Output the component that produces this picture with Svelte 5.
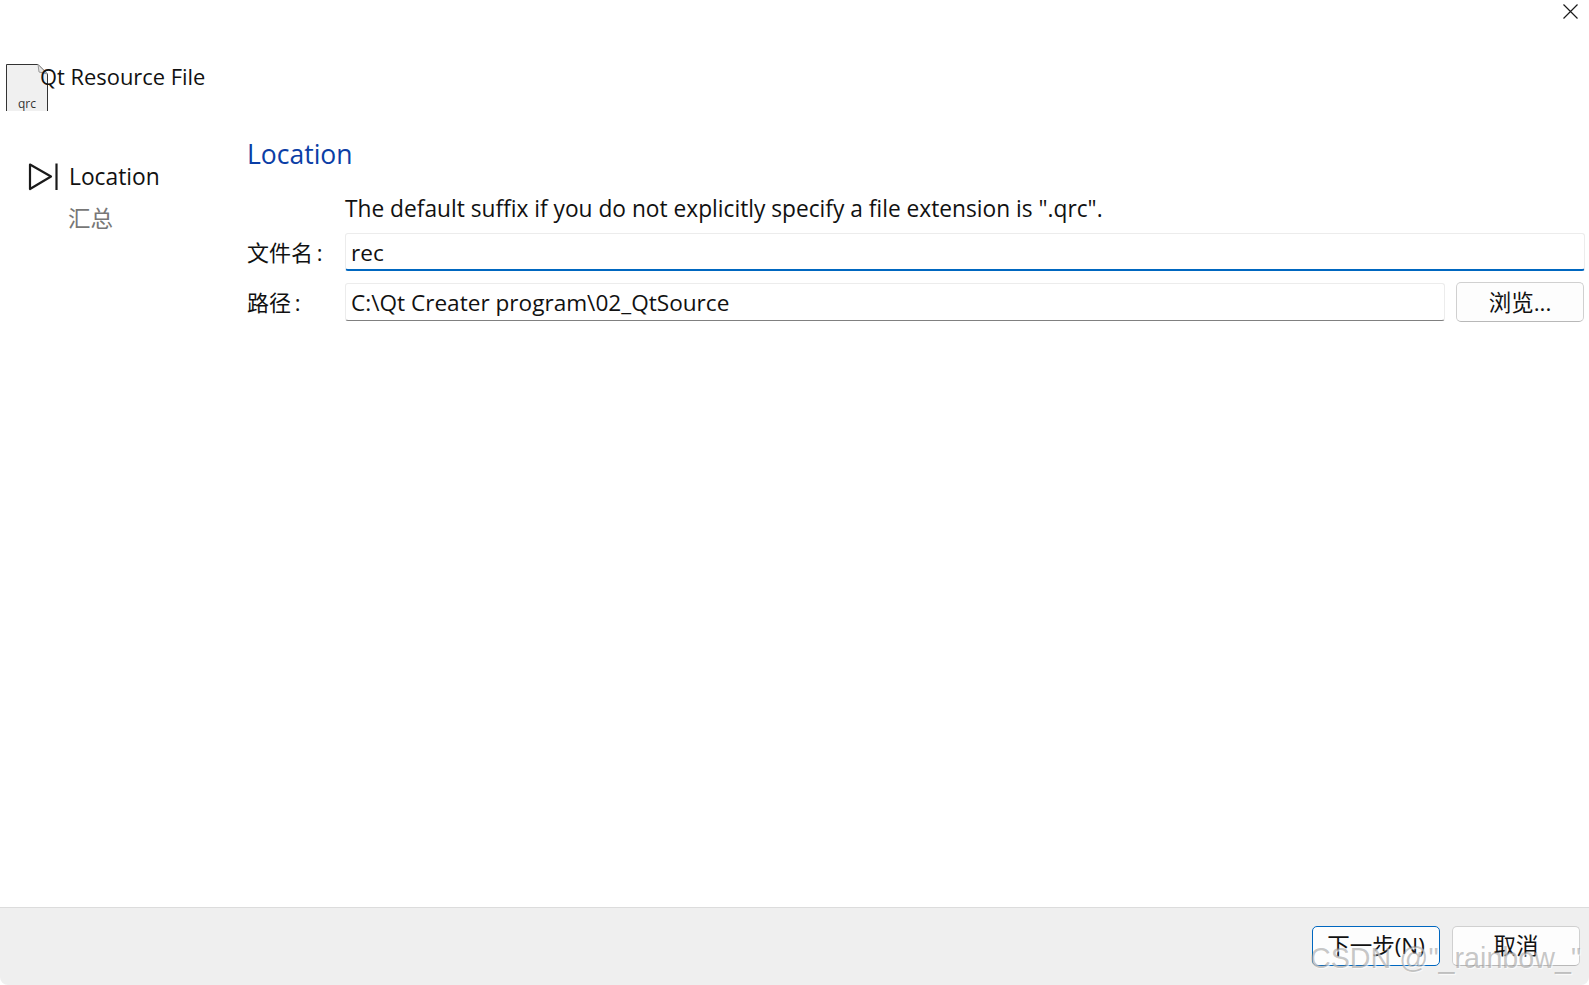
<script>
    let fileName = "rec";
    let path = "C:\\Qt Creater program\\02_QtSource";
</script>

<div class="dialog">
    <button class="close" aria-label="close">
        <svg width="17" height="17" viewBox="0 0 17 17">
            <path d="M1.5 1.5 L15.5 15.5 M15.5 1.5 L1.5 15.5" stroke="#1a1a1a" stroke-width="1.2" fill="none" />
        </svg>
    </button>

    <div class="header">
        <div class="file-icon">
            <svg width="44" height="47" viewBox="0 0 44 47">
                <path d="M0.5 47 V0.5 H32 L41.5 10 V47" fill="#f0f0f0" stroke="#333" stroke-width="1" />
                <path d="M32 0.5 L33 8 L41.5 10 Z" fill="#e4e4e4" stroke="#999" stroke-width="1" />
            </svg>
            <span class="qrc">qrc</span>
        </div>
        <span class="title">Qt Resource File</span>
    </div>

    <div class="main">
        <div class="side">
            <div class="step">
                <svg width="30" height="30" viewBox="0 0 30 30">
                    <path d="M2 2.5 L23 14.5 L2 27 Z" fill="none" stroke="#1a1a1a" stroke-width="2.2" stroke-linejoin="round" />
                    <path d="M28.5 1.5 V28" stroke="#1a1a1a" stroke-width="2.2" />
                </svg>
                <span>Location</span>
            </div>
            <div class="step-next">汇总</div>
        </div>

        <div class="content">
            <h1>Location</h1>
            <div class="form">
                <div></div>
                <div class="hint">The default suffix if you do not explicitly specify a file extension is ".qrc".</div>
                <span class="label">文件名&thinsp;:</span>
                <input class="field focus" bind:value={fileName} />
                <span class="label">路径&thinsp;:</span>
                <div class="path-row">
                    <input class="field" bind:value={path} />
                    <button class="btn browse">浏览...</button>
                </div>
            </div>
        </div>
    </div>

    <div class="footer">
        <button class="btn next">下一步(N)</button>
        <button class="btn">取消</button>
    </div>

    <div class="watermark">CSDN @"_rainbow_"</div>
</div>

<style>
    :global(body) {
        margin: 0;
        background: #fff;
    }

    .dialog {
        position: relative;
        height: 985px;
        display: flex;
        flex-direction: column;
        overflow: hidden;
        font-family: "Open Sans", "Noto Sans CJK SC", sans-serif;
        color: #111;
        background: #fff;
    }

    .close {
        position: absolute;
        top: 3px;
        right: 10px;
        width: 17px;
        height: 17px;
        padding: 0;
        border: none;
        background: none;
    }

    .header {
        height: 47px;
        margin-top: 64px;
        padding-left: 6px;
        display: flex;
    }

    .file-icon {
        position: relative;
        width: 44px;
        height: 47px;
        flex: none;
    }

    .file-icon svg {
        display: block;
    }

    .qrc {
        position: absolute;
        left: 12px;
        top: 32px;
        font-size: 12px;
        line-height: 16px;
        color: #333;
    }

    .title {
        position: relative;
        margin-left: -10px;
        font-size: 21.9px;
        line-height: 26px;
        white-space: nowrap;
    }

    .main {
        flex: 1;
        display: flex;
    }

    .side {
        width: 247px;
        flex: none;
        padding: 51px 0 0 28px;
        box-sizing: border-box;
    }

    .step {
        display: flex;
        align-items: center;
        gap: 11px;
        font-size: 22.8px;
        line-height: 30px;
    }

    .step-next {
        margin: 12px 0 0 40px;
        font-size: 22.5px;
        line-height: 30px;
        color: #777;
    }

    .content {
        flex: 1;
        padding: 24px 4px 0 0;
    }

    h1 {
        margin: 0;
        font-size: 26.5px;
        font-weight: 400;
        line-height: 38px;
        color: #0b3ea6;
    }

    .form {
        margin-top: 18px;
        display: grid;
        grid-template-columns: 98px 1fr;
        align-items: center;
        row-gap: 11px;
    }

    .hint {
        font-size: 22.73px;
        line-height: 36px;
        margin-bottom: -5px;
    }

    .label {
        font-size: 22px;
        margin-bottom: 2px;
    }

    .field {
        display: block;
        width: 100%;
        height: 38px;
        box-sizing: border-box;
        padding: 0 5px;
        font: inherit;
        font-size: 22.6px;
        color: #111;
        background: #fff;
        border: 1px solid #ececec;
        border-bottom: 1px solid #808080;
        border-radius: 3px;
        outline: none;
    }

    .focus {
        padding-top: 2px;
        border-bottom: 2px solid #0067c0;
    }

    .path-row {
        display: flex;
        align-items: center;
        gap: 11px;
    }

    .btn {
        width: 128px;
        height: 40px;
        padding: 0 0 3px;
        flex: none;
        font: inherit;
        font-size: 22.5px;
        color: #111;
        background: #fdfdfd;
        border: 1px solid #d0d0d0;
        border-bottom-color: #b8b8b8;
        border-radius: 5px;
    }

    .browse {
        margin-right: 1px;
        padding-bottom: 1px;
    }

    .next {
        border: 1.5px solid #0067c0;
    }

    .footer {
        height: 78px;
        flex: none;
        display: flex;
        justify-content: flex-end;
        gap: 12px;
        padding: 18px 9px 0 0;
        box-sizing: border-box;
        background: #efefef;
        border-top: 1px solid #dcdcdc;
        border-bottom-left-radius: 8px;
        border-bottom-right-radius: 8px;
    }

    .watermark {
        position: absolute;
        left: 1310px;
        top: 939px;
        font-family: "Liberation Sans", sans-serif;
        font-size: 28.7px;
        line-height: 38px;
        white-space: nowrap;
        color: rgba(130, 130, 130, 0.45);
        text-shadow: 1px 1px 1px rgba(255, 255, 255, 0.7);
    }
</style>
